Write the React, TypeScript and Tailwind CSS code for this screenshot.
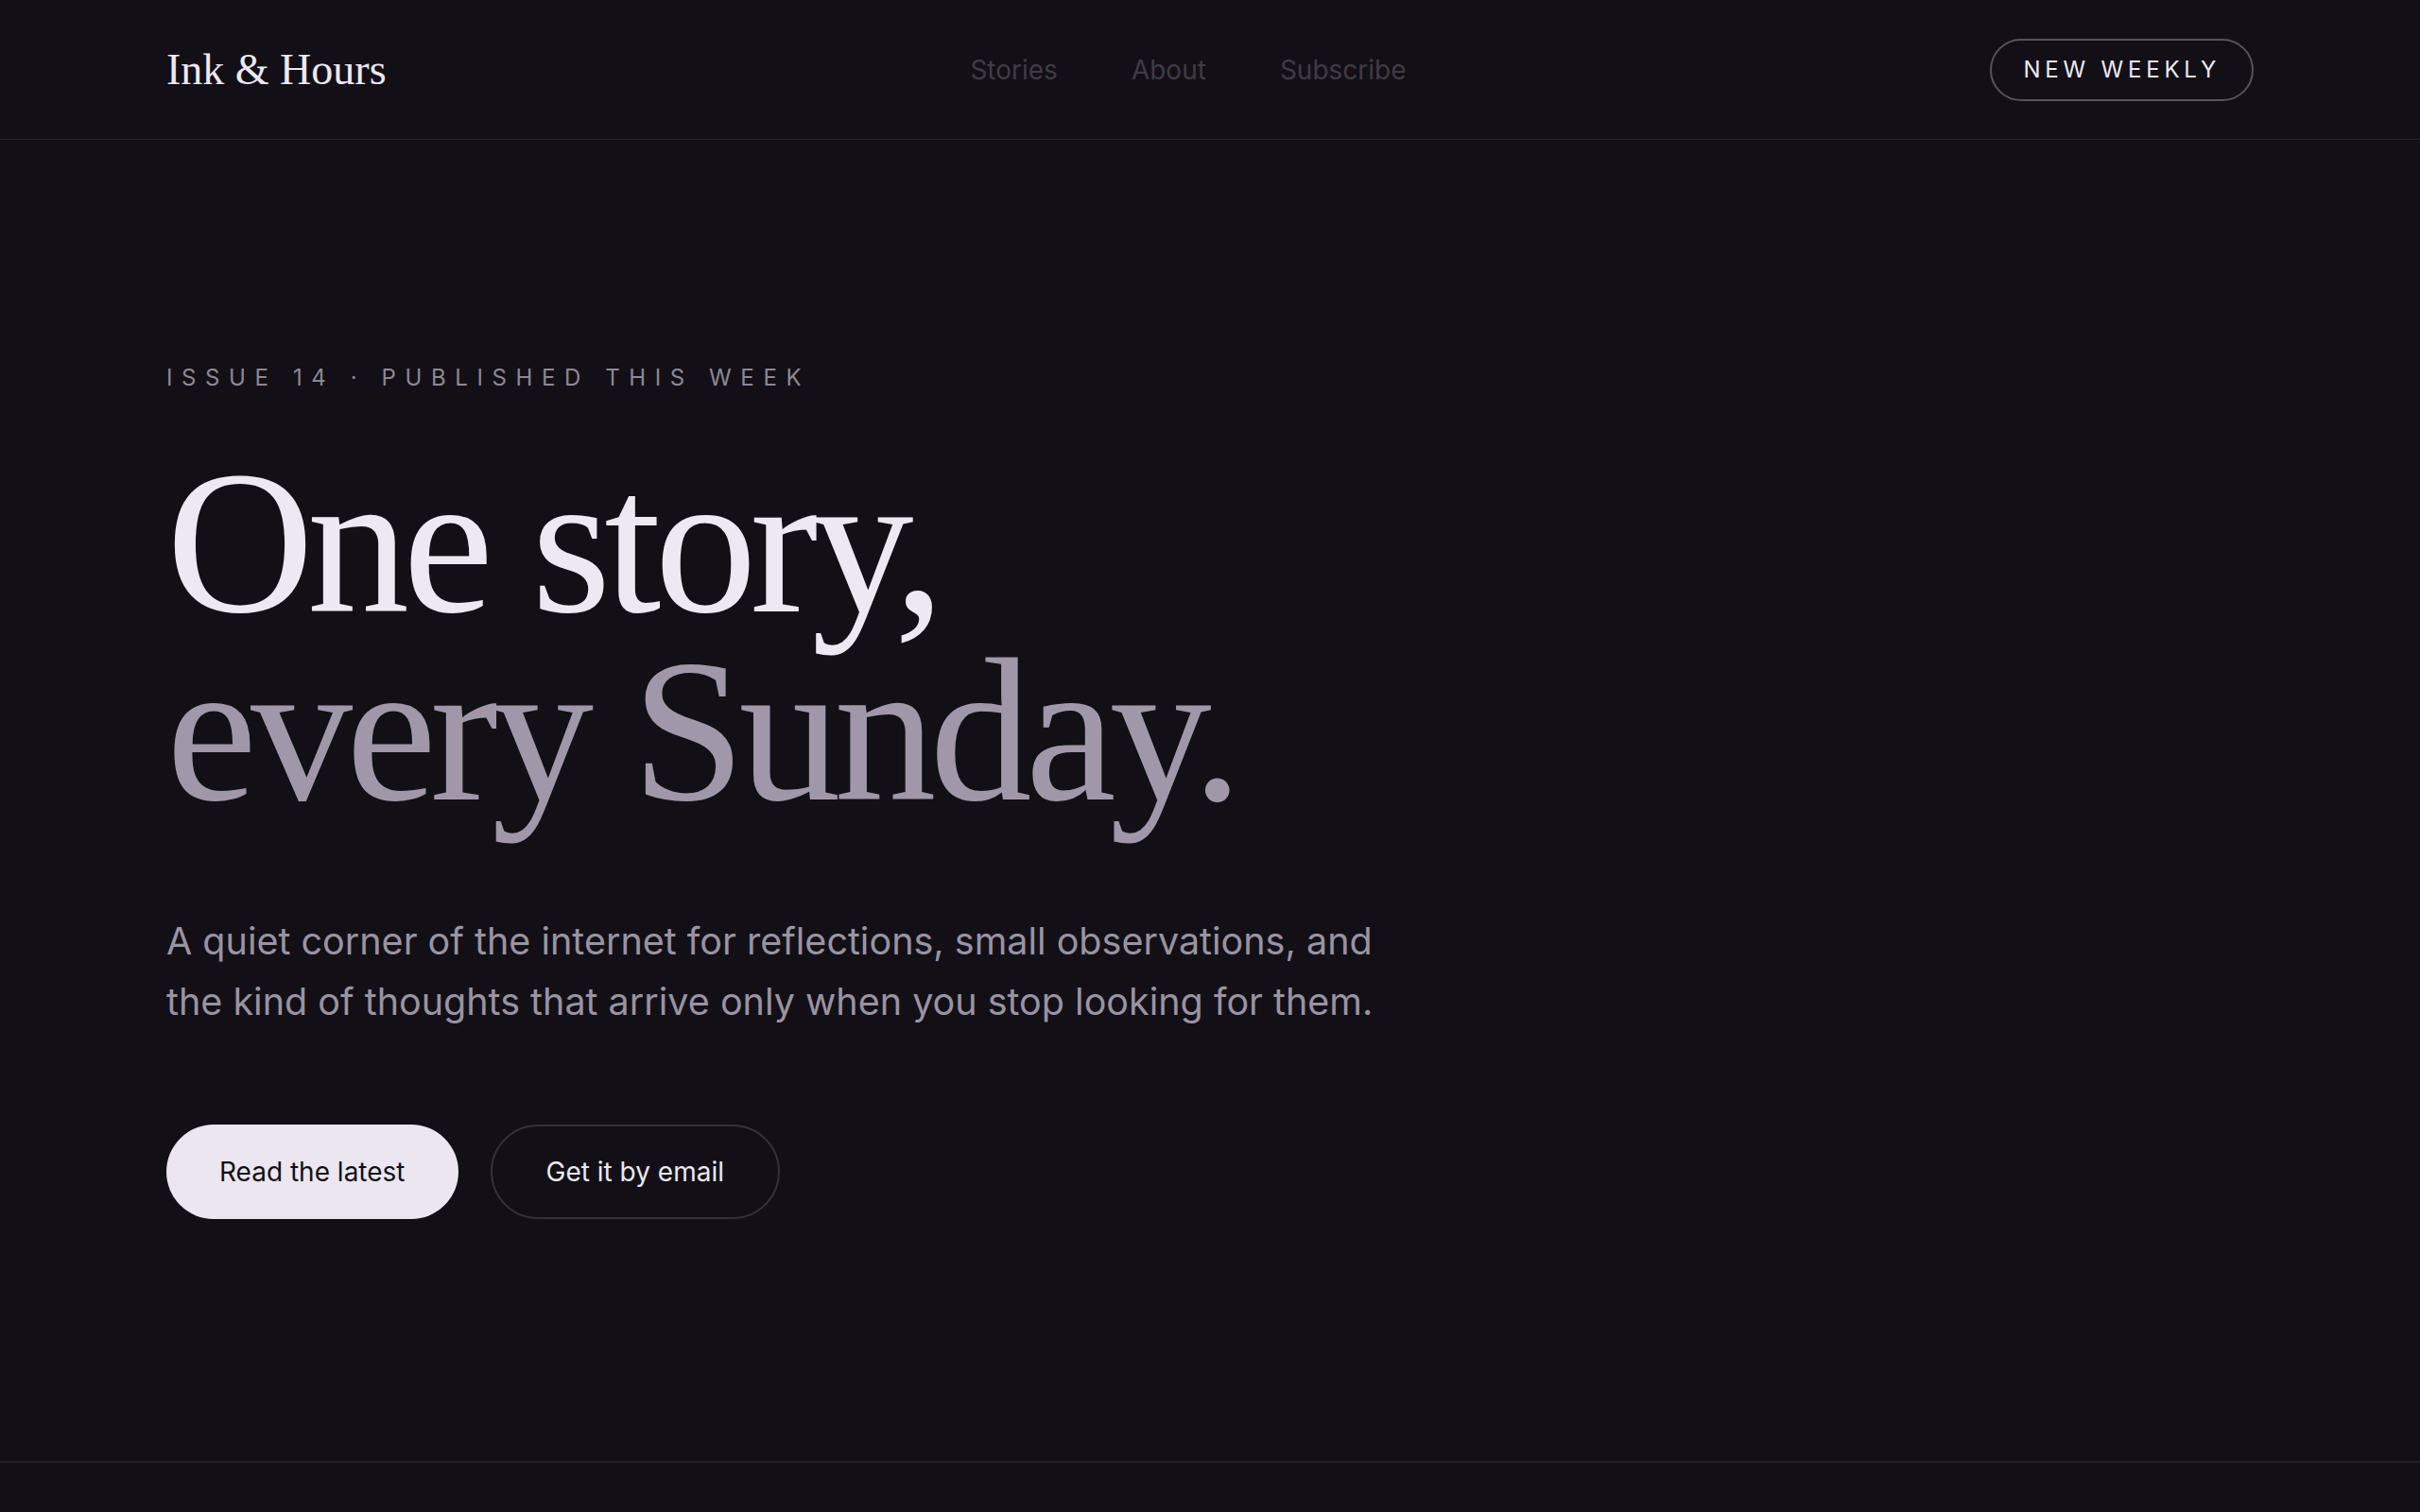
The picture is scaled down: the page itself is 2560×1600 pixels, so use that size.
import { useState } from "react";

const NAV = ["Stories", "About", "Subscribe"];

function Header() {
  return (
    <header className="h-[148px] border-b border-[#222027]">
      <div className="h-full flex items-center justify-between px-[176px]">
        <a
          href="#"
          className="text-[46px] leading-none text-[#ece8f2]"
          style={{ fontFamily: '"Liberation Serif", serif' }}
        >
          Ink &amp; Hours
        </a>
        <nav className="flex items-center gap-[78px] text-[28px] text-[#3e3b44]">
          {NAV.map((item) => (
            <a key={item} href="#" className="hover:text-[#9a93a2] transition-colors">
              {item}
            </a>
          ))}
        </nav>
        <button className="h-[66px] px-[33px] rounded-full border-2 border-[#56525c] text-[24px] tracking-[0.2em] text-[#ece8f2]">
          NEW WEEKLY
        </button>
      </div>
    </header>
  );
}

function Hero() {
  const [subscribed, setSubscribed] = useState(false);

  return (
    <section className="border-b-2 border-[#221f26] px-[176px] pt-[236px] pb-[256px]">
      {/* Issue line */}
      <p className="text-[24px] leading-[32px] tracking-[0.4em] text-[#8e8795]">
        ISSUE 14 · PUBLISHED THIS WEEK
      </p>

      <h1
        className="mt-[60px] text-[216px] leading-[0.92] tracking-[-0.032em]"
        style={{ fontFamily: '"Liberation Serif", serif' }}
      >
        <span className="block text-[#ede9f3]">One story,</span>
        <span className="block text-[#a098a8]">every Sunday.</span>
      </h1>

      <p className="mt-[91px] max-w-[1320px] text-[39.5px] leading-[64px] text-[#9a93a2]">
        A quiet corner of the internet for reflections, small observations, and the kind of
        thoughts that arrive only when you stop looking for them.
      </p>

      <div className="mt-[98px] flex items-center gap-[34px]">
        <a
          href="#"
          className="h-[100px] px-[56px] flex items-center rounded-full bg-[#ebe6f0] text-[28px] text-[#121016]"
        >
          Read the latest
        </a>
        <button
          onClick={() => setSubscribed(!subscribed)}
          className="h-[100px] px-[57px] flex items-center rounded-full border-2 border-[#34313a] text-[28px] text-[#ece8f2]"
        >
          {subscribed ? "Subscribed" : "Get it by email"}
        </button>
      </div>
    </section>
  );
}

export default function App() {
  return (
    <div
      className="min-h-screen bg-[#121016] antialiased"
      style={{ fontFamily: 'Inter, "Liberation Sans", sans-serif' }}
    >
      <Header />
      <Hero />
    </div>
  );
}
